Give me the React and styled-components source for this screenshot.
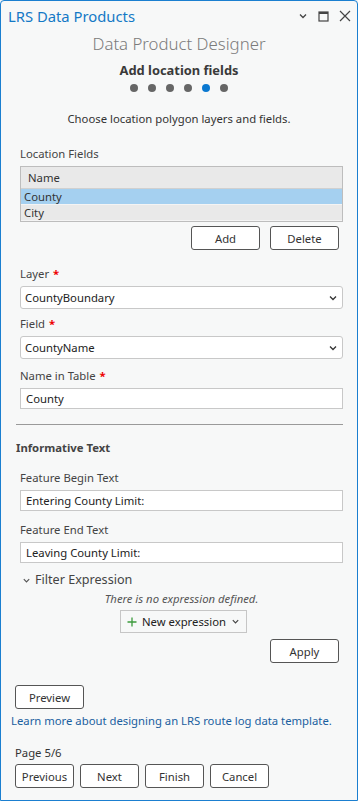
import React from "react";
import styled, { createGlobalStyle } from "styled-components";

const Global = createGlobalStyle`
  html, body { margin: 0; padding: 0; background: #f7f8f8; }
  * { box-sizing: border-box; }
  body { font-family: "Noto Sans", "Open Sans", sans-serif; color: #333; }
`;

const FS = "11.3px";

const Frame = styled.div`
  width: 358px;
  height: 801px;
  border: 1px solid #1b7fd0;
  border-radius: 4px 4px 0 0;
  background: #f7f8f8;
  display: flex;
  flex-direction: column;
  overflow: hidden;
`;

const TitleBar = styled.div`
  height: 30px;
  display: flex;
  align-items: center;
  padding: 0 6px 0 7px;
`;

const Title = styled.div`
  flex: 1;
  font-size: 14.8px;
  color: #1479c6;
  line-height: 1;
`;

const WinButtons = styled.div`
  display: flex;
  align-items: center;
  gap: 10px;
  color: #444;
`;

const Heading = styled.div`
  text-align: center;
  font-size: 16.8px;
  font-weight: 300;
  color: #7b7b7b;
  line-height: 24px;
  margin-top: 1px;
`;

const StepTitle = styled.div`
  text-align: center;
  font-size: 12.9px;
  font-weight: 700;
  color: #3a3a3a;
  margin-top: 4px;
  line-height: 20px;
`;

const Dots = styled.div`
  display: flex;
  justify-content: center;
  gap: 10px;
  margin-top: 4px;
`;

const Dot = styled.span`
  width: 8px;
  height: 8px;
  border-radius: 50%;
  background: ${(p) => (p.$active ? "#0a78d0" : "#666")};
`;

const Intro = styled.div`
  text-align: center;
  font-size: ${FS};
  color: #333;
  margin-top: 19px;
  line-height: 16px;
`;

const Body = styled.div`
  padding: 0 14px 0 19px;
  display: flex;
  flex-direction: column;
`;

const Label = styled.div`
  font-size: ${FS};
  color: #444;
  line-height: 16px;
  height: 16px;
  margin-top: ${(p) => p.$mt || 0}px;
  margin-bottom: 4px;
`;

const Req = styled.span`
  color: #e00;
  margin-left: 4px;
  font-weight: 700;
`;

const Table = styled.div`
  border: 1px solid #bdbdbd;
  background: #e9e9e9;
  font-size: ${FS};
  color: #333;
`;

const TableHead = styled.div`
  height: 22px;
  line-height: 22px;
  padding-left: 7px;
  border-bottom: 1px solid #d0d0d0;
`;

const TableRow = styled.div`
  height: 16px;
  line-height: 16px;
  padding-left: 3px;
  background: ${(p) => (p.$sel ? "#a5d0f0" : "#e9e9e9")};
  border-bottom: 1px solid #f4f4f4;
`;

const ButtonRow = styled.div`
  display: flex;
  justify-content: ${(p) => p.$justify || "flex-start"};
  gap: ${(p) => p.$gap || 10}px;
  margin-top: ${(p) => p.$mt || 0}px;
  padding-right: ${(p) => p.$pr || 0}px;
`;

const Button = styled.button`
  width: ${(p) => p.$w || 69}px;
  height: 24px;
  border: 1px solid #555;
  border-radius: 3px;
  background: #fff;
  font-family: inherit;
  font-size: ${FS};
  color: #333;
  padding: 0;
  cursor: pointer;
`;

const Select = styled.div`
  height: 23px;
  border: 1px solid #c8c8c8;
  border-radius: 3px;
  background: #fff;
  display: flex;
  align-items: center;
  padding: 0 4px 0 4px;
  font-size: ${FS};
  color: #222;
  justify-content: space-between;
`;

const Input = styled.div`
  height: 21px;
  border: 1px solid #c8c8c8;
  background: #fff;
  display: flex;
  align-items: center;
  padding: 0 5px;
  font-size: ${FS};
  color: #222;
`;

const Divider = styled.div`
  height: 1px;
  background: #9a9a9a;
  margin: 15px 14px 0 15px;
`;

const SectionTitle = styled.div`
  font-size: ${FS};
  font-weight: 700;
  color: #444;
  padding-left: 15px;
  margin-top: 15px;
  line-height: 16px;
`;

const Expander = styled.div`
  display: flex;
  align-items: center;
  gap: 4px;
  font-size: 12.6px;
  color: #444;
  margin-top: 8px;
  padding-left: 2px;
  line-height: 18px;
`;

const Note = styled.div`
  text-align: center;
  font-style: italic;
  font-size: ${FS};
  color: #555;
  margin-top: 2px;
  line-height: 16px;
`;

const ExprButton = styled.div`
  align-self: center;
  height: 23px;
  border: 1px solid #c6c6c6;
  display: flex;
  align-items: center;
  gap: 5px;
  padding: 0 6px 0 6px;
  font-size: ${FS};
  color: #222;
  margin-top: 3px;
  margin-left: 4px;
`;

const Footer = styled.div`
  padding: 0 0 0 14px;
  display: flex;
  flex-direction: column;
`;

const Link = styled.a`
  font-size: ${FS};
  color: #1a5f9f;
  text-decoration: none;
  margin-left: -4px;
  margin-top: 4px;
  line-height: 16px;
`;

const PageNum = styled.div`
  font-size: ${FS};
  color: #333;
  margin-top: 16px;
  line-height: 16px;
`;

const Chevron = ({ size = 10, color = "#333" }) => (
  <svg width={size} height={size} viewBox="0 0 10 10">
    <path d="M2 3.5 L5 6.5 L8 3.5" fill="none" stroke={color} strokeWidth="1.3" />
  </svg>
);

export default function App() {
  return (
    <>
      <Global />
      <Frame>
        <TitleBar>
          <Title>LRS Data Products</Title>
          <WinButtons>
            <Chevron size={10} color="#444" />
            <svg width="11" height="11" viewBox="0 0 11 11">
              <rect x="1" y="1" width="9" height="9" fill="none" stroke="#444" strokeWidth="1.2" />
              <rect x="1" y="1" width="9" height="2" fill="#444" />
            </svg>
            <svg width="12" height="12" viewBox="0 0 12 12">
              <path d="M1 1 L11 11 M11 1 L1 11" stroke="#444" strokeWidth="1.2" />
            </svg>
          </WinButtons>
        </TitleBar>
        <Heading>Data Product Designer</Heading>
        <StepTitle>Add location fields</StepTitle>
        <Dots>
          {[0, 1, 2, 3, 4, 5].map((i) => (
            <Dot key={i} $active={i === 4} />
          ))}
        </Dots>
        <Intro>Choose location polygon layers and fields.</Intro>
        <Body>
          <Label $mt={19}>Location Fields</Label>
          <Table>
            <TableHead>Name</TableHead>
            <TableRow $sel>County</TableRow>
            <TableRow>City</TableRow>
          </Table>
          <ButtonRow $justify="flex-end" $gap={10} $mt={4} $pr={4}>
            <Button>Add</Button>
            <Button>Delete</Button>
          </ButtonRow>
          <Label $mt={16}>
            Layer<Req>*</Req>
          </Label>
          <Select>
            CountyBoundary <Chevron />
          </Select>
          <Label $mt={7}>
            Field<Req>*</Req>
          </Label>
          <Select>
            CountyName <Chevron />
          </Select>
          <Label $mt={9}>
            Name in Table<Req>*</Req>
          </Label>
          <Input>County</Input>
        </Body>
        <Divider />
        <SectionTitle>Informative Text</SectionTitle>
        <Body>
          <Label $mt={14}>Feature Begin Text</Label>
          <Input>Entering County Limit:</Input>
          <Label $mt={11}>Feature End Text</Label>
          <Input>Leaving County Limit:</Input>
          <Expander>
            <Chevron size={9} color="#555" />
            Filter Expression
          </Expander>
          <Note>There is no expression defined.</Note>
          <ExprButton>
            <svg width="10" height="10" viewBox="0 0 10 10">
              <path d="M5 0.5 V9.5 M0.5 5 H9.5" stroke="#3c9a3c" strokeWidth="1.3" />
            </svg>
            New expression
            <Chevron size={9} color="#444" />
          </ExprButton>
          <ButtonRow $justify="flex-end" $mt={6} $pr={4}>
            <Button>Apply</Button>
          </ButtonRow>
        </Body>
        <Footer>
          <ButtonRow $mt={22}>
            <Button>Preview</Button>
          </ButtonRow>
          <Link href="#">Learn more about designing an LRS route log data template.</Link>
          <PageNum>Page 5/6</PageNum>
          <ButtonRow $mt={3} $gap={6}>
            <Button $w={59}>Previous</Button>
            <Button $w={59}>Next</Button>
            <Button $w={59}>Finish</Button>
            <Button $w={59}>Cancel</Button>
          </ButtonRow>
        </Footer>
      </Frame>
    </>
  );
}
